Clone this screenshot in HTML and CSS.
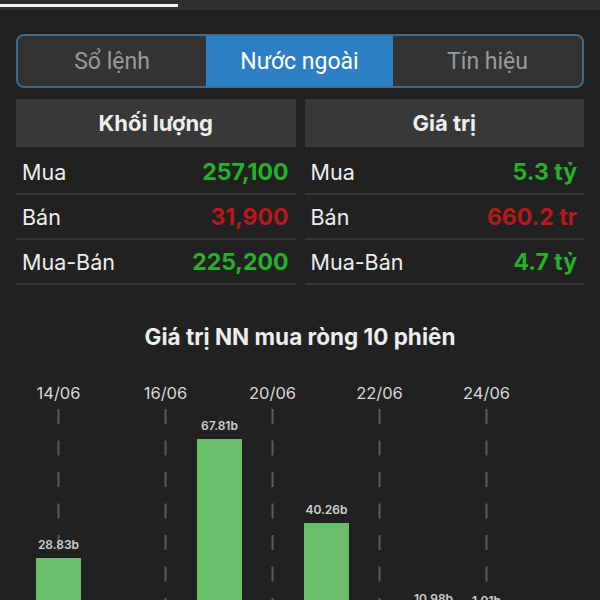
FILE: index.html
```html
<!DOCTYPE html>
<html lang="vi">
<head>
<meta charset="utf-8">
<link rel="stylesheet" href="styles.css">
</head>
<body>
<div class="topbar"><div class="indicator"></div></div>
<main class="main">
  <div class="segmented">
    <div class="seg">Sổ lệnh</div>
    <div class="seg active">Nước ngoài</div>
    <div class="seg">Tín hiệu</div>
  </div>
  <div class="tables">
    <div class="col">
      <div class="head">Khối lượng</div>
      <div class="row"><span class="label">Mua</span><span class="val up">257,100</span></div>
      <div class="row"><span class="label">Bán</span><span class="val down">31,900</span></div>
      <div class="row"><span class="label">Mua-Bán</span><span class="val up">225,200</span></div>
    </div>
    <div class="col">
      <div class="head">Giá trị</div>
      <div class="row"><span class="label">Mua</span><span class="val up">5.3 tỷ</span></div>
      <div class="row"><span class="label">Bán</span><span class="val down">660.2 tr</span></div>
      <div class="row"><span class="label">Mua-Bán</span><span class="val up">4.7 tỷ</span></div>
    </div>
  </div>
  <h2 class="title">Giá trị NN mua ròng 10 phiên</h2>
</main>
<svg class="chart" width="600" height="240" viewBox="0 0 600 240">
  <g class="dates">
    <text x="58.5" y="29">14/06</text>
    <text x="165.5" y="29">16/06</text>
    <text x="272.5" y="29">20/06</text>
    <text x="379.5" y="29">22/06</text>
    <text x="486.5" y="29">24/06</text>
  </g>
  <g class="grid">
    <line x1="58.5" y1="39" x2="58.5" y2="240"/>
    <line x1="165.5" y1="39" x2="165.5" y2="240"/>
    <line x1="272.5" y1="39" x2="272.5" y2="240"/>
    <line x1="379.5" y1="39" x2="379.5" y2="240"/>
    <line x1="486.5" y1="39" x2="486.5" y2="240"/>
  </g>
  <g class="bars">
    <rect x="36" y="188" width="45" height="60"/>
    <rect x="197" y="69" width="45" height="180"/>
    <rect x="304" y="153" width="45" height="100"/>
  </g>
  <g class="vals">
    <text x="58.5" y="179">28.83b</text>
    <text x="219.5" y="60">67.81b</text>
    <text x="326.5" y="144">40.26b</text>
    <text x="433.5" y="233">10.98b</text>
    <text x="486.5" y="235">1.01b</text>
  </g>
</svg>
</body>
</html>
```

FILE: styles.css
```css
* { box-sizing: border-box; }
html, body {
  margin: 0;
  padding: 0;
  width: 600px;
  height: 600px;
  overflow: hidden;
  background: #212121;
  font-family: Inter, "Noto Sans", sans-serif;
  color: #ececec;
}
.topbar {
  height: 10px;
  background: #2f2f2f;
  padding-top: 4px;
}
.indicator {
  width: 178px;
  height: 3px;
  background: #f4f4f4;
}
.main {
  padding: 0 16px;
}
.segmented {
  margin-top: 24px;
  height: 54px;
  border: 2px solid #3d6a8e;
  border-radius: 8px;
  display: grid;
  grid-template-columns: 188px 187px 1fr;
  overflow: hidden;
  background: #333;
}
.seg {
  display: flex;
  align-items: center;
  justify-content: center;
  font-family: Roboto, sans-serif;
  font-size: 23px;
  color: #9a9a9a;
}
.seg.active {
  background: #2b7fc2;
  color: #fff;
}
.tables {
  margin-top: 11px;
  display: grid;
  grid-template-columns: 1fr 1fr;
  column-gap: 9px;
}
.head {
  height: 48px;
  background: #383838;
  display: flex;
  align-items: center;
  justify-content: center;
  font-size: 22px;
  font-weight: 700;
  color: #eee;
  margin-bottom: 3px;
}
.row {
  height: 45px;
  border-bottom: 2px solid #343434;
  display: flex;
  align-items: center;
  justify-content: space-between;
  padding: 1px 7px 0 6px;
}
.label {
  font-size: 21.5px;
  color: #ededed;
}
.val {
  font-size: 23px;
  font-weight: 700;
}
.up { color: #27b12a; }
.down { color: #b8191b; }
.title {
  margin: 40px 0 0;
  text-align: center;
  font-size: 22.5px;
  line-height: 24px;
  font-weight: 700;
  color: #ededed;
}
.chart {
  display: block;
  margin-top: 21px;
}
.dates text {
  font-family: Inter, sans-serif;
  font-size: 16.5px;
  fill: #d8d8d8;
  text-anchor: middle;
}
.grid line {
  stroke: #5a5a5a;
  stroke-width: 2;
  stroke-dasharray: 15 16.5;
}
.bars rect {
  fill: #6cbf6a;
}
.vals text {
  font-family: Inter, sans-serif;
  font-size: 12px;
  font-weight: 600;
  fill: #cfcfcf;
  text-anchor: middle;
}
```
